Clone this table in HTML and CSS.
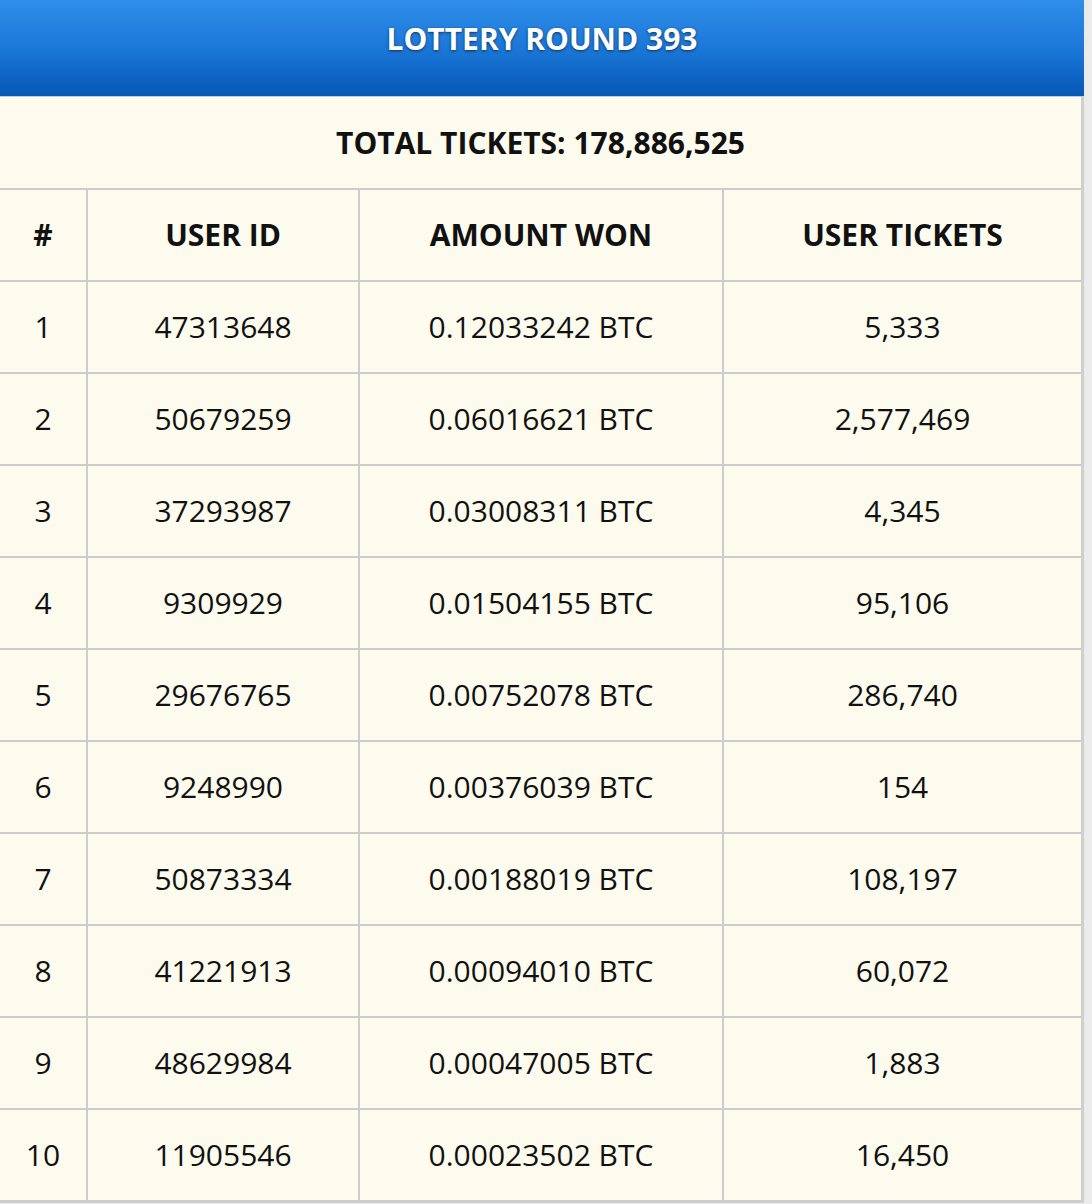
FILE: index.html
```html
<!DOCTYPE html>
<html lang="en">
<head>
<meta charset="utf-8">
<title>Lottery Round 393</title>
<link rel="stylesheet" href="styles.css">
</head>
<body>
<div class="panel">
  <div class="title">LOTTERY ROUND 393</div>
  <div class="board">
    <div class="total">TOTAL TICKETS: 178,886,525</div>
    <div class="grid">
      <div class="cell head">#</div>
      <div class="cell head">USER ID</div>
      <div class="cell head">AMOUNT WON</div>
      <div class="cell head last">USER TICKETS</div>

      <div class="cell">1</div><div class="cell">47313648</div><div class="cell">0.12033242 BTC</div><div class="cell last">5,333</div>
      <div class="cell">2</div><div class="cell">50679259</div><div class="cell">0.06016621 BTC</div><div class="cell last">2,577,469</div>
      <div class="cell">3</div><div class="cell">37293987</div><div class="cell">0.03008311 BTC</div><div class="cell last">4,345</div>
      <div class="cell">4</div><div class="cell">9309929</div><div class="cell">0.01504155 BTC</div><div class="cell last">95,106</div>
      <div class="cell">5</div><div class="cell">29676765</div><div class="cell">0.00752078 BTC</div><div class="cell last">286,740</div>
      <div class="cell">6</div><div class="cell">9248990</div><div class="cell">0.00376039 BTC</div><div class="cell last">154</div>
      <div class="cell">7</div><div class="cell">50873334</div><div class="cell">0.00188019 BTC</div><div class="cell last">108,197</div>
      <div class="cell">8</div><div class="cell">41221913</div><div class="cell">0.00094010 BTC</div><div class="cell last">60,072</div>
      <div class="cell">9</div><div class="cell">48629984</div><div class="cell">0.00047005 BTC</div><div class="cell last">1,883</div>
      <div class="cell">10</div><div class="cell">11905546</div><div class="cell">0.00023502 BTC</div><div class="cell last">16,450</div>
    </div>
  </div>
</div>
</body>
</html>
```

FILE: styles.css
```css
html, body {
  margin: 0;
  padding: 0;
  background: #ebebeb;
}

body {
  font-family: "Open Sans", "Liberation Sans", sans-serif;
  color: #111;
}

.panel {
  width: 1084px;
}

.title {
  box-sizing: border-box;
  height: 97px;
  padding-top: 18px;
  line-height: 41px;
  font-size: 30px;
  font-weight: 700;
  color: #fff;
  text-align: center;
  text-shadow: 0 1px 3px rgba(0, 0, 0, 0.6);
  background: linear-gradient(to bottom, #2f8ee9 0%, #1c78d8 50%, #0558b6 100%);
  border-bottom: 1px solid #b9cde2;
}

.board {
  background: #fdfbed;
  border-right: 3px solid #cfcfcf;
  border-bottom: 1px solid #cfcfcf;
}

.total {
  height: 91px;
  line-height: 91px;
  text-align: center;
  font-size: 30px;
  font-weight: 700;
  border-bottom: 2px solid #cccccc;
}

.grid {
  display: grid;
  grid-template-columns: 88px 272px 364px 357px;
}

.cell {
  box-sizing: border-box;
  height: 92px;
  line-height: 90px;
  text-align: center;
  font-size: 30px;
  border-bottom: 2px solid #cccccc;
  border-right: 2px solid #cccccc;
}

.cell.last {
  border-right: none;
}

.cell.head {
  font-weight: 700;
}
```
